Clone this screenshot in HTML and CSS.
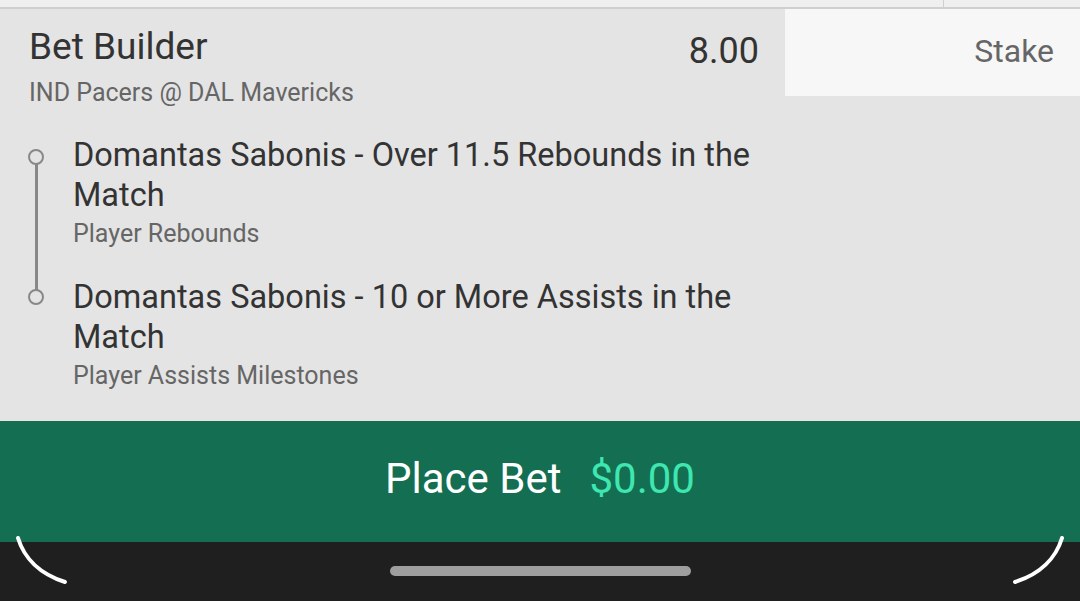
FILE: index.html
```html
<!DOCTYPE html>
<html>
<head>
<meta charset="utf-8">
<link rel="stylesheet" href="styles.css">
</head>
<body>
<div class="screen">
  <div class="topstrip"><div class="topdiv"></div></div>
  <div class="slip">
    <div class="header">
      <div class="titles">
        <div class="title">Bet Builder</div>
        <div class="event">IND Pacers @ DAL Mavericks</div>
      </div>
      <div class="odds">8.00</div>
      <div class="stake">Stake</div>
    </div>
    <div class="legs">
      <div class="leg">
        <div class="rail first"><span class="dot"></span></div>
        <div class="legtext">
          <div class="legname">Domantas Sabonis - Over 11.5 Rebounds in the Match</div>
          <div class="legmarket">Player Rebounds</div>
        </div>
      </div>
      <div class="leg">
        <div class="rail last"><span class="dot"></span></div>
        <div class="legtext">
          <div class="legname">Domantas Sabonis - 10 or More Assists in the Match</div>
          <div class="legmarket">Player Assists Milestones</div>
        </div>
      </div>
    </div>
  </div>
  <div class="place">
    <span class="place-label">Place Bet</span>
    <span class="place-amount">$0.00</span>
  </div>
  <div class="navbar"><div class="pill"></div></div>
  <svg class="corner left" width="80" height="70" viewBox="0 0 80 70"><path d="M18 6 C24 26 40 42 65 50" fill="none" stroke="#fff" stroke-width="4" stroke-linecap="round"/></svg>
  <svg class="corner right" width="80" height="70" viewBox="0 0 80 70"><path d="M62 6 C56 26 40 42 15 50" fill="none" stroke="#fff" stroke-width="4" stroke-linecap="round"/></svg>
</div>
</body>
</html>
```
FILE: styles.css
```css
* { box-sizing: border-box; }
html, body { margin: 0; padding: 0; }
body { width: 1080px; height: 601px; overflow: hidden; font-family: Roboto, "Noto Sans", sans-serif; background: #e4e4e4; }
.screen { position: relative; width: 1080px; height: 601px; display: flex; flex-direction: column; }
.topstrip { height: 9px; background: #efefef; border-bottom: 2px solid #cfcfcf; position: relative; flex: none; }
.topdiv { position: absolute; left: 943px; top: 0; width: 1px; height: 7px; background: #cfcfcf; }
.slip { flex: 1; background: #e4e4e4; display: flex; flex-direction: column; }
.header { display: flex; align-items: flex-start; }
.titles { flex: 1; padding-left: 29px; padding-top: 18px; }
.title { font-size: 37px; color: #333; line-height: 40px; }
.event { font-size: 25px; color: #666; line-height: 28px; margin-top: 12px; }
.odds { font-size: 36px; color: #333; padding-top: 22px; margin-right: 26px; line-height: 40px; }
.stake { width: 295px; height: 87px; background: #f7f7f7; color: #666; font-size: 32px; text-align: right; padding-right: 26px; padding-top: 22px; line-height: 40px; }
.legs { padding-top: 28px; }
.leg { display: flex; height: 142px; }
.rail { width: 73px; position: relative; flex: none; }
.dot { position: absolute; left: 28px; top: 14px; width: 16px; height: 16px; border: 2px solid #888; border-radius: 50%; background: #e4e4e4; z-index: 1; }
.rail.last .dot { top: 12px; }
.rail.first::after { content: ""; position: absolute; left: 35px; top: 29px; width: 3px; height: 126px; background: #888; }
.legtext { flex: 1; }
.legname { font-size: 32.5px; color: #333; line-height: 40px; width: 700px; }
.legmarket { font-size: 25px; color: #666; line-height: 32px; margin-top: 3px; }
.place { height: 121px; background: #136e52; display: flex; justify-content: center; align-items: center; gap: 28px; font-size: 42px; padding-bottom: 6px; flex: none; }
.place-label { color: #fff; }
.place-amount { color: #3ee6b0; }
.navbar { height: 59px; background: #1f1f1f; display: flex; justify-content: center; padding-top: 24px; flex: none; }
.pill { width: 301px; height: 10px; border-radius: 5px; background: #9e9e9e; }
.corner { position: absolute; top: 532px; }
.corner.left { left: 0; }
.corner.right { right: 0; }
```
